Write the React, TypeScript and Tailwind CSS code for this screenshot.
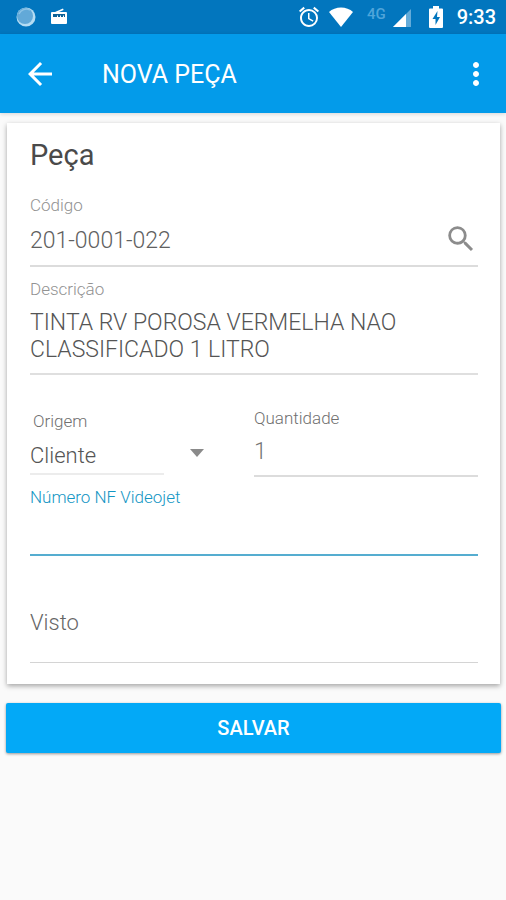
import { useState } from "react"
import { MdAlarm, MdArrowBack, MdMoreVert, MdSearch } from "react-icons/md"

const labelClass = "block w-fit text-[17px] leading-6 font-light"
const inputClass = "block w-full bg-transparent font-light outline-none"

function StatusBar() {
  return (
    <div className="flex h-[34px] items-center justify-between bg-[#0276be] pl-4 pr-2.5 text-white">
      <div className="flex items-center gap-3.5">
        {/* Sync bubble */}
        <svg viewBox="0 0 20 20" className="size-5">
          <circle cx="10" cy="10" r="9.5" fill="#b4dcf3" />
          <circle cx="9" cy="9" r="8" fill="#62a9d8" />
          <path d="M3 7a8 8 0 0 1 11-4" fill="none" stroke="#8cc3e6" strokeWidth="1.5" />
        </svg>
        {/* Radio */}
        <svg viewBox="0 0 18 18" className="size-[18px]">
          <path d="M5 4 13 .5l.6 1.400L9 4h7q1 0 1 1v10q0 1-1 1H2q-1 0-1-1V5q0-1 1-1Z" fill="#fff" />
          <path d="M3 6h12v3h-1V7.500h-1V9h-2V7.500h-1V9H8V7.500H7V9H3Z" fill="#0b6298" />
        </svg>
      </div>
      <div className="flex items-center">
        <MdAlarm className="size-6" />
        <svg viewBox="0 0 26 20" className="ml-[7px] h-5 w-[26px]">
          <path d="M13 20 1 5C4 2.200 8.500.5 13 .5S22 2.200 25 5Z" fill="#fff" />
        </svg>
        <span className="ml-[13px] pb-1.5 text-[15px] leading-5 font-medium text-[#4fa5da]">4G</span>
        <svg viewBox="0 0 18 18" className="ml-[7px] mt-0.5 size-[18px]">
          <path d="M18 0v18H0Z" fill="#63abd9" />
          <path d="M13 5v13H0Z" fill="#fff" />
        </svg>
        {/* Battery */}
        <svg viewBox="0 0 14 22" className="ml-[18px] h-[22px] w-3.5">
          <path d="M4 0h6v2.500h3q1 0 1 1V21q0 1-1 1H1q-1 0-1-1V3.500q0-1 1-1h3Z" fill="#fff" />
          <path d="m8.500 5-5 8h3v6l4.500-8H8Z" fill="#0276be" />
        </svg>
        <span className="ml-3.5 text-xl leading-6 font-medium">9:33</span>
      </div>
    </div>
  )
}

function AppBar() {
  return (
    <header className="relative flex h-[79px] items-center bg-[#039bea] pl-[22px] pr-3 text-white shadow-[0_1px_4px_rgba(0,0,0,0.15)]">
      <button type="button" aria-label="Voltar">
        <MdArrowBack className="size-9" />
      </button>
      <h1 className="ml-11 flex-1 pt-[3px] text-[25px] leading-8">NOVA PEÇA</h1>
      <button type="button" aria-label="Mais opções">
        <MdMoreVert className="size-9" />
      </button>
    </header>
  )
}

export default function App() {
  const [codigo, setCodigo] = useState("201-0001-022")
  const [descricao, setDescricao] = useState("TINTA RV POROSA VERMELHA NAO CLASSIFICADO 1 LITRO")
  const [origem, setOrigem] = useState("Cliente")
  const [quantidade, setQuantidade] = useState("1")
  const [numeroNf, setNumeroNf] = useState("")
  const [visto, setVisto] = useState("")

  return (
    <div className="min-h-screen bg-[#fafafa] font-[Roboto,sans-serif]">
      <StatusBar />
      <AppBar />

      <form className="pt-2.5 pr-[5px] pl-1.5 pb-6" onSubmit={(e) => e.preventDefault()}>
        <section className="mx-px bg-white pt-3.5 pr-[22px] pb-[21px] pl-[23px] shadow-[0_2px_5px_rgba(0,0,0,0.35)]">
          <h2 className="text-[29px] leading-9 text-[#4a4a4a]">Peça</h2>

          {/* Código */}
          <div className="mt-5">
            <label htmlFor="codigo" className={`${labelClass} text-[#929292]`}>Código</label>
            <div className="flex h-[50px] items-center border-b-2 border-[#dcdcdc]">
              <input
                id="codigo"
                value={codigo}
                onChange={(e) => setCodigo(e.target.value)}
                className={`${inputClass} min-w-0 flex-1 text-[23px] text-[#606060]`}
              />
              <button type="button" aria-label="Pesquisar" className="pb-1 text-[#8c8c8c]">
                <MdSearch className="size-[34px]" />
              </button>
            </div>
          </div>

          {/* Descrição */}
          <div className="mt-2.5">
            <label htmlFor="descricao" className={`${labelClass} text-[#929292]`}>Descrição</label>
            <textarea
              id="descricao"
              rows={2}
              value={descricao}
              onChange={(e) => setDescricao(e.target.value)}
              className={`${inputClass} resize-none overflow-hidden border-b-2 border-[#dfdfdf] pt-2 pb-2.5 text-[23px] leading-[27px] text-[#555555]`}
            />
          </div>

          <div className="mt-[31px] grid grid-cols-2">
            {/* Origem */}
            <div className="pt-[3px]">
              <label htmlFor="origem" className={`${labelClass} pl-[3px] text-[#707070]`}>Origem</label>
              <div className="relative mr-10">
                <select
                  id="origem"
                  value={origem}
                  onChange={(e) => setOrigem(e.target.value)}
                  className={`${inputClass} h-10 appearance-none pt-1 text-[22px] text-[#555555]`}
                >
                  <option>Cliente</option>
                  <option>Videojet</option>
                </select>
                <svg viewBox="0 0 14 8" className="pointer-events-none absolute top-4 right-2.5 h-2 w-3.5">
                  <path d="M0 0h14L7 8Z" fill="#8a8a8a" />
                </svg>
              </div>
              <div className="mr-[90px] h-0.5 bg-[#ececec]" />
            </div>

            {/* Quantidade */}
            <div>
              <label htmlFor="quantidade" className={`${labelClass} text-[#707070]`}>Quantidade</label>
              <input
                id="quantidade"
                inputMode="numeric"
                value={quantidade}
                onChange={(e) => setQuantidade(e.target.value)}
                className={`${inputClass} h-[47px] border-b-2 border-[#dcdcdc] pb-[3px] text-[23px] text-[#757575]`}
              />
            </div>
          </div>

          {/* Número NF */}
          <div className="mt-2">
            <label htmlFor="numero-nf" className={`${labelClass} text-[#1496c4]`}>Número NF Videojet</label>
            <input
              id="numero-nf"
              value={numeroNf}
              onChange={(e) => setNumeroNf(e.target.value)}
              className={`${inputClass} h-[47px] border-b-2 border-[#55add0] text-[23px] text-[#555555]`}
            />
          </div>

          {/* Visto */}
          <input
            aria-label="Visto"
            placeholder="Visto"
            value={visto}
            onChange={(e) => setVisto(e.target.value)}
            className={`${inputClass} mt-[46px] h-[61px] border-b border-[#d4d4d4] pb-5 text-[22px] text-[#555555] placeholder:text-[#666666]`}
          />
        </section>

        <button
          type="submit"
          className="mt-[19px] block h-[50px] w-full rounded-xs bg-[#03a9f7] text-xl font-medium text-white shadow-[0_1px_3px_rgba(0,0,0,0.4)]"
        >
          SALVAR
        </button>
      </form>
    </div>
  )
}
